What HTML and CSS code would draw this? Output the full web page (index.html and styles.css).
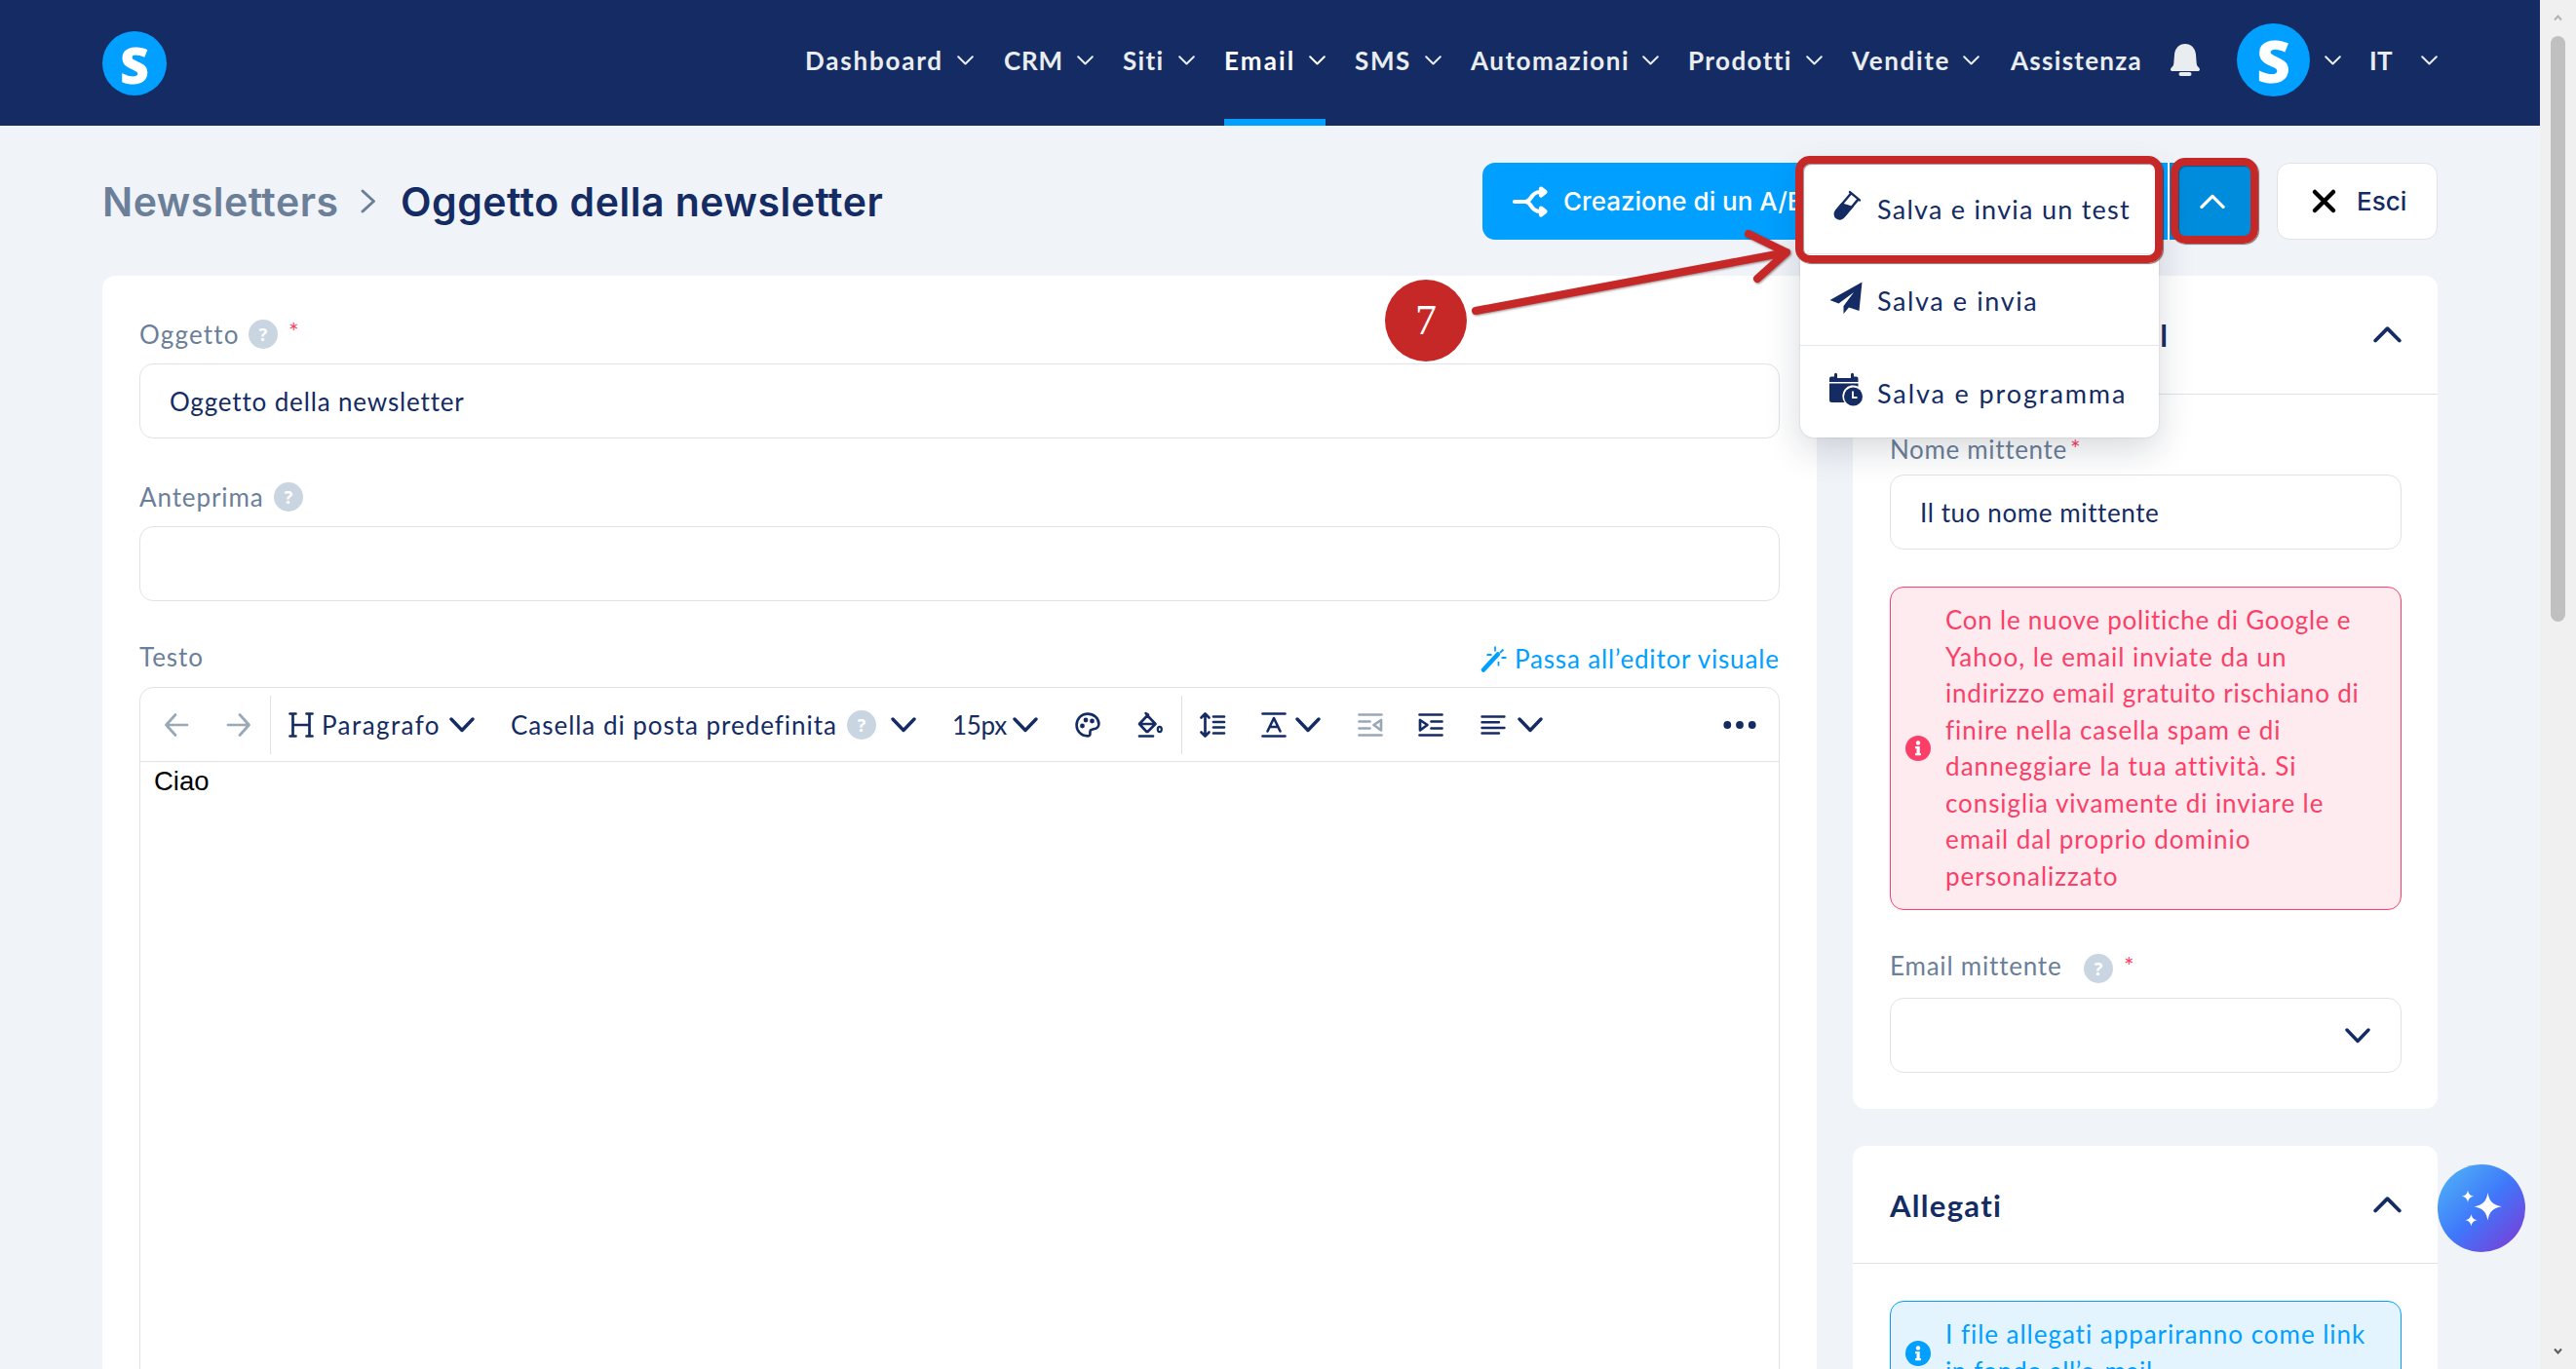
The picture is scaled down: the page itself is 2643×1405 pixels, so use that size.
FILE: index.html
```html
<!DOCTYPE html>
<html lang="it">
<head>
<meta charset="utf-8">
<title>Oggetto della newsletter</title>
<link rel="stylesheet" href="styles.css">
</head>
<body>
<svg class="defs" aria-hidden="true">
  <symbol id="down" viewBox="0 0 26 16"><path d="M2 2l11 11.500L24 2" fill="none" stroke="currentColor" stroke-width="3.400" stroke-linecap="round" stroke-linejoin="round"/></symbol>
  <symbol id="thin" viewBox="0 0 17 10"><path d="M1.200 1.200l7.300 7.300 7.300-7.300" fill="none" stroke="currentColor" stroke-width="2" stroke-linecap="round" stroke-linejoin="round"/></symbol>
  <symbol id="up" viewBox="0 0 29 17"><path d="M2.200 14.500L14.500 2.200l12.300 12.300" fill="none" stroke="currentColor" stroke-width="3.800" stroke-linecap="round" stroke-linejoin="round"/></symbol>
  <symbol id="info" viewBox="0 0 26 26"><circle cx="13" cy="13" r="13" fill="currentColor"/><circle cx="13" cy="7.500" r="2.200" fill="#fff"/><path d="M10 11h4.700v7H16v2.300h-6V18h1.500v-4.700H10z" fill="#fff"/></symbol>
</svg>
<div class="app">
  <div class="page">
    <header class="header">
      <div class="logo">S</div>
      <nav class="nav">
        <a class="item i1"><span class="t n1">Dashboard</span><svg class="thin"><use href="#thin"/></svg></a>
        <a class="item i2"><span class="t n2">CRM</span><svg class="thin"><use href="#thin"/></svg></a>
        <a class="item i3"><span class="t n3">Siti</span><svg class="thin"><use href="#thin"/></svg></a>
        <a class="item i4 active"><span class="t n4">Email</span><svg class="thin"><use href="#thin"/></svg></a>
        <a class="item i5"><span class="t n5">SMS</span><svg class="thin"><use href="#thin"/></svg></a>
        <a class="item i6"><span class="t n6">Automazioni</span><svg class="thin"><use href="#thin"/></svg></a>
        <a class="item i7"><span class="t n7">Prodotti</span><svg class="thin"><use href="#thin"/></svg></a>
        <a class="item i8"><span class="t n8">Vendite</span><svg class="thin"><use href="#thin"/></svg></a>
        <a class="item i9"><span class="t n9">Assistenza</span></a>
        <svg class="bell" viewBox="0 0 30 33"><path d="M15 0c6 0 10.500 4.500 11 11l.7 9c.2 2.200 1 3 2.300 4.300 1.800 2 1 3.700-1 3.700H2c-2 0-2.800-1.700-1-3.700C2.300 23 3.100 22.200 3.300 20L4 11C4.500 4.500 9 0 15 0z" fill="#e9edef"/><rect x="8.500" y="29" width="13" height="4" rx="2" fill="#e9edef"/></svg>
        <div class="avatar">S</div>
        <svg class="thin"><use href="#thin"/></svg>
        <span class="t lang">IT</span>
        <svg class="thin lang-caret"><use href="#thin"/></svg>
      </nav>
    </header>
    <main class="main">
      <div class="top">
        <h1 class="crumbs"><span class="t c1">Newsletters</span><svg class="sep" viewBox="0 0 16 25"><path d="M2 2l11.500 10.500L2 23" fill="none" stroke="#6c7f99" stroke-width="3" stroke-linecap="round" stroke-linejoin="round"/></svg><span class="t c2">Oggetto della newsletter</span></h1>
        <div class="actions">
          <div class="btn ab"><svg class="split" viewBox="0 0 36 32"><g fill="none" stroke="#fff" stroke-width="4.200" stroke-linecap="round" stroke-linejoin="round"><path d="M2 16h11c7 0 5-10 15-10h3M13 16c7 0 5 10 15 10h3M29 2.500l4.500 3.500-4.500 3.500zM29 22.500l4.500 3.500-4.500 3.500z"/></g></svg><span class="t abt">Creazione di un A/B test</span></div>
          <div class="btn save"><div class="caret"><svg viewBox="0 0 29 17"><use href="#up"/></svg></div></div>
          <div class="btn exit"><svg viewBox="0 0 25 25"><path d="M3 3l19 19M22 3L3 22" stroke="#000" stroke-width="4.500" stroke-linecap="round"/></svg><span class="t esci">Esci</span></div>
          <div class="menu">
            <div class="opt"><svg viewBox="0 0 34 34"><g transform="rotate(40 17 17)"><path d="M10.500 3h13M12.200 3v22a4.800 4.800 0 0 0 9.600 0V3" fill="none" stroke="#142c63" stroke-width="2.400" stroke-linecap="round"/><path d="M11 15l12-5v15a6 6 0 0 1-12 0z" fill="#142c63" transform="translate(0 2)"/></g></svg><span class="t m1">Salva e invia un test</span></div>
            <div class="opt"><svg viewBox="0 0 34 34"><path d="M33.500 0.500L30.500 30 20 26.500l-5.500 6.500V25L25 11 9.500 22.500.5 19z" fill="#142c63"/></svg><span class="t m2">Salva e invia</span></div>
            <div class="opt"><svg viewBox="0 0 34 34"><path d="M0 9V5.500Q0 3.500 2 3.500h3V1.200a1.500 1.500 0 0 1 3 0V5h14V1.200a1.500 1.500 0 0 1 3 0v2.300h2.500q2 0 2 2V9z" fill="#142c63"/><path d="M0 10.500h29.500v3.200a11 11 0 0 0-14 16.300H2.500Q0 30 0 27.500z" fill="#142c63"/><circle cx="24.500" cy="24" r="9.500" fill="#142c63"/><path d="M24 18.500v6.500h4.500" fill="none" stroke="#fff" stroke-width="1.800"/></svg><span class="t m3">Salva e programma</span></div>
          </div>
        </div>
      </div>
      <div class="cols">
        <section class="card editor-card">
          <div class="label"><span class="t l1">Oggetto</span><i class="help">?</i><b class="req">*</b></div>
          <div class="input"><span class="t v1">Oggetto della newsletter</span></div>
          <div class="label second"><span class="t l2">Anteprima</span><i class="help">?</i></div>
          <div class="input"></div>
          <div class="label third"><span class="t l3">Testo</span>
            <a class="visual"><svg viewBox="0 0 26 26"><path d="M2 24.500L13.500 12" stroke="#019fff" stroke-width="4.600" stroke-linecap="round"/><path d="M15 10.500l1.800-2" stroke="#019fff" stroke-width="4.600" stroke-linecap="round"/><path d="M14 0.500v5M5.500 9h5M22.500 3.500L19 7M20.500 12h5M17.500 16v4.500" stroke="#019fff" stroke-width="1.800"/></svg><span class="t vis">Passa all’editor visuale</span></a></div>
          <div class="editor">
            <div class="toolbar">
              <svg class="ic back muted" viewBox="0 0 26 26"><path d="M24 13H2.500M12 2.500L2.500 13 12 23.500" /></svg>
              <svg class="ic fwd muted" viewBox="0 0 26 26"><path d="M2 13h21.500M14 2.500L23.500 13 14 23.500"/></svg>
              <span class="rule r1"></span>
              <svg class="ic hd" viewBox="0 0 26 26"><path d="M1.500 1.500h6M18.500 1.500h6M1.500 24.500h6M18.500 24.500h6M4.500 1.500v23M21.500 1.500v23M4.500 13h17"/></svg>
              <span class="t tb1">Paragrafo</span>
              <svg class="dn d1"><use href="#down"/></svg>
              <span class="t tb2">Casella di posta predefinita</span>
              <i class="help th">?</i>
              <svg class="dn d2"><use href="#down"/></svg>
              <span class="t tb3">15px</span>
              <svg class="dn d3"><use href="#down"/></svg>
              <svg class="ic pal" viewBox="0 0 26 26"><path d="M13 1.600C6 1.600 1.600 7 1.600 13S6 24.400 13 24.400c3.500 0 2-3.200 2.600-5.200C16.500 16 24.400 19 24.400 12 24.400 6 19 1.600 13 1.600z" stroke-width="2.600"/><g fill="#142c63" stroke="none"><circle cx="7.500" cy="14" r="2.400"/><circle cx="11" cy="8" r="2.400"/><circle cx="17.500" cy="9" r="2.400"/></g></svg>
              <svg class="ic buck" viewBox="0 0 26 26"><path d="M9.500 2.500l9 9.500-8 8h-1l-7.500-8 9-9.500L8.500 1M2.500 12h15" stroke-width="2.600"/><path d="M2 24.500h14" stroke-width="2.600"/><ellipse cx="22.800" cy="17.500" rx="2" ry="2.600" stroke-width="2.200"/></svg>
              <span class="rule r2"></span>
              <svg class="ic lh" viewBox="0 0 26 26"><path d="M5.500 2v22M1.500 5.500l4-4 4 4M1.500 20.500l4 4 4-4M14 4.500h11M14 10h11M14 15.500h11M14 21.500h11"/></svg>
              <svg class="ic fa" viewBox="0 0 26 26"><path d="M1.500 1.500h23M1.500 24.500h23" /><path d="M6.500 19.500L13 6l6.500 13.500M9 15h8" stroke-width="2.600"/></svg>
              <svg class="dn d4"><use href="#down"/></svg>
              <svg class="ic out muted" viewBox="0 0 26 26"><path d="M1.500 2.500h23M1.500 9.500h11M1.500 16.500h11M1.500 23.500h23M24 8v10.500L16.500 13z"/></svg>
              <svg class="ic ind" viewBox="0 0 26 26"><path d="M1.500 2.500h23M13.500 9.500h11M13.500 16.500h11M1.500 23.500h23M2 8v10.500L9.500 13z"/></svg>
              <svg class="ic al" viewBox="0 0 26 26"><path d="M1.500 4.500h23M1.500 10.200h17.500M1.500 16h23M1.500 21.500h17.500" stroke-width="2.400"/></svg>
              <svg class="dn d5"><use href="#down"/></svg>
              <svg class="dots" viewBox="0 0 34 8"><g fill="#142c63"><circle cx="4.300" cy="4" r="3.900"/><circle cx="17" cy="4" r="3.900"/><circle cx="29.700" cy="4" r="3.900"/></g></svg>
            </div>
            <div class="body">Ciao</div>
          </div>
        </section>
        <aside class="side">
          <section class="card">
            <div class="head tall"><h2 class="t h1">Impostazioni email</h2><svg class="up"><use href="#up"/></svg></div>
            <div class="content first">
              <div class="label"><span class="t s1">Nome mittente</span><b class="req close">*</b></div>
              <div class="input tight"><span class="t s2">Il tuo nome mittente</span></div>
              <div class="alert red"><svg><use href="#info"/></svg><p><span class="t a1">Con le nuove politiche di Google e</span><br><span class="t a2">Yahoo, le email inviate da un</span><br><span class="t a3">indirizzo email gratuito rischiano di</span><br><span class="t a4">finire nella casella spam e di</span><br><span class="t a5">danneggiare la tua attività. Si</span><br><span class="t a6">consiglia vivamente di inviare le</span><br><span class="t a7">email dal proprio dominio</span><br><span class="t a8">personalizzato</span></p></div>
              <div class="label mail"><span class="t s3">Email mittente</span><i class="help">?</i><b class="req">*</b></div>
              <div class="input select"><svg class="dn"><use href="#down"/></svg></div>
            </div>
          </section>
          <section class="card attach">
            <div class="head"><h2 class="t h2">Allegati</h2><svg class="up"><use href="#up"/></svg></div>
            <div class="content">
              <div class="alert blue"><svg><use href="#info"/></svg><p><span class="t b1">I file allegati appariranno come link</span><br><span class="t b2">in fondo all’e-mail.</span></p></div>
            </div>
          </section>
        </aside>
      </div>
    </main>
  </div>
  <div class="scroll">
    <svg class="tri" viewBox="0 0 9 6"><path d="M1 5.500L4.500 1.500 8 5.500" fill="none" stroke="#b4b4b4" stroke-width="2"/></svg>
    <div class="thumb"></div>
    <svg class="tri end" viewBox="0 0 9 6"><path d="M1 .5l3.500 4L8 .5" fill="none" stroke="#5a5a5a" stroke-width="2"/></svg>
  </div>
</div>
<div class="fab"><svg viewBox="0 0 90 90"><g fill="#fff"><path d="M51.500 29c1.500 9 5 12.500 14 14.300-9 1.800-12.500 5.300-14 14.300-1.500-9-5-12.500-14-14.300 9-1.800 12.500-5.300 14-14.300z"/><path d="M31 26.500c.8 4 2.300 5.400 6 6.200-3.700.8-5.200 2.300-6 6.200-.8-3.900-2.300-5.400-6-6.200 3.700-.8 5.200-2.200 6-6.200zM34.500 51c.8 4 2.300 5.400 6 6.200-3.700.8-5.200 2.300-6 6.200-.8-3.900-2.300-5.400-6-6.200 3.700-.8 5.200-2.200 6-6.200z"/></g></svg></div>
<svg class="arrow" viewBox="0 0 340 64"><path d="M14 87L333 27M294 8l39 19-30 27"/></svg>
<div class="mark box1"></div>
<div class="mark box2"></div>
<div class="step">7</div>
</body>
</html>
```

FILE: styles.css
```css
* { box-sizing: border-box; }
body { margin: 0; width: 2643px; height: 1405px; overflow: hidden; position: relative; font-family: Lato, "Open Sans", sans-serif; font-size: 26px; color: #142c63; background: #f0f3f8; }
h1, h2, p { margin: 0; }
i, b { font-style: normal; }
svg { display: block; flex: none; overflow: visible; }
.defs { position: absolute; width: 0; height: 0; }
.t { white-space: nowrap; flex: none; }
.app { display: flex; height: 1405px; }
.page { width: 2606px; height: 1405px; overflow: hidden; }

/* header */
.header { height: 129px; background: #142c63; display: flex; padding-left: 105px; color: #e9edef; }
.logo, .avatar { border-radius: 50%; background: #019fff; color: #fff; font-family: "Open Sans", sans-serif; font-weight: 800; display: flex; align-items: center; justify-content: center; flex: none; }
.logo { width: 66px; height: 66px; margin-top: 32px; font-size: 52px; }
.nav { display: flex; align-items: center; height: 123px; margin-left: 655px; font-size: 26px; font-weight: 700; }
.item { height: 129px; margin-top: 6px; padding-bottom: 6px; display: flex; align-items: center; justify-content: space-between; flex: none; }
.i1 { width: 173px; margin-right: 31px; }
.i2 { width: 92px; margin-right: 30px; }
.i3 { width: 74px; margin-right: 30px; }
.i4 { width: 104px; margin-right: 30px; }
.i5 { width: 89px; margin-right: 30px; }
.i6 { width: 193px; margin-right: 30px; }
.i7 { width: 138px; margin-right: 30px; }
.i8 { width: 131px; margin-right: 32px; }
.i9 { width: 135px; margin-right: 29px; }
.n1 { letter-spacing: 1.800px; }
.n2 { letter-spacing: .83px; }
.n3 { letter-spacing: 1.360px; }
.n4 { letter-spacing: 2.100px; }
.n5 { letter-spacing: 1.640px; }
.n6 { letter-spacing: 1.490px; }
.n7 { letter-spacing: 1.420px; }
.n8 { letter-spacing: 1.660px; }
.n9 { letter-spacing: 1.280px; }
.active { color: #fff; border-bottom: 7px solid #019fff; padding: 1px 0 0; }
.thin { width: 17px; height: 10px; }
.bell { width: 30px; height: 33px; margin-right: 38px; }
.avatar { width: 75px; height: 75px; margin-right: 15px; font-size: 60px; }
.lang { margin-left: 29px; width: 24px; letter-spacing: .34px; }
.lang-caret { margin-left: 29px; }

/* title row */
.main { padding: 38px 105px 0; }
.top { display: flex; justify-content: space-between; height: 79px; position: relative; }
.crumbs { display: flex; align-items: center; font: 600 41px/76px Inter, sans-serif; letter-spacing: .5px; }
.c1 { color: #6c7f99; width: 242px; }
.sep { width: 16px; height: 25px; margin: 0 25px 0 23px; }
.actions { display: flex; position: relative; width: 980px; }
.btn { height: 79px; border-radius: 13px; display: flex; align-items: center; flex: none; font: 500 26px/30px Inter, sans-serif; }
.ab { width: 424px; background: #019fff; color: #fff; padding-left: 31px; }
.split { width: 36px; height: 32px; margin-right: 16px; }
.save { width: 350px; margin-left: 20px; background: #019fff; justify-content: flex-end; overflow: hidden; }
.caret { width: 91px; height: 79px; border-left: 2px solid #fff; background: #008cdc; display: flex; align-items: center; justify-content: center; padding-right: 2px; color: #fff; }
.caret svg { width: 26px; height: 16px; }
.exit { width: 165px; margin-left: 21px; background: #fff; border: 1px solid #dfe3e7; padding-left: 35px; }
.exit svg { width: 25px; height: 25px; margin-right: 21px; }
.menu { position: absolute; left: 326px; top: 0; width: 368px; height: 282px; background: #fff; border-radius: 14px; box-shadow: 0 12px 36px rgba(20, 30, 50, .17), 0 0 2px rgba(20, 30, 50, .2); }
.opt { height: 94px; display: flex; align-items: center; padding: 2px 0 0 30px; font-size: 27px; border-bottom: 1px solid #e3e6e9; }
.opt:last-child { border: 0; }
.opt svg { width: 34px; height: 34px; margin: -6px 15px 0 0; }
.m1 { letter-spacing: 1.250px; }
.m2 { letter-spacing: 1.600px; }
.m3 { letter-spacing: 1.900px; }

/* cards */
.cols { display: grid; grid-template-columns: 1759px 600px; gap: 37px; margin-top: 37px; }
.card { background: #fff; border-radius: 13px; }
.editor-card { padding: 45px 38px 0; height: 1200px; }
.label { display: flex; align-items: center; height: 30px; color: #6c7f99; }
.help { width: 30px; height: 30px; border-radius: 50%; background: #cad5e2; color: #fff; font: 700 18px/30px "Open Sans", sans-serif; text-align: center; margin-left: 10px; flex: none; }
.req { color: #fb3f68; font: 400 25px/25px Lato, sans-serif; align-self: flex-start; margin-left: 11px; }
.close { margin: 2px 0 0 3px; }
.input { height: 77px; border: 1px solid #dfe3e7; border-radius: 14px; display: flex; align-items: center; padding-left: 30px; margin-top: 15px; background: #fff; }
.second { margin-top: 45px; }
.third { margin-top: 42px; justify-content: space-between; }
.l1 { width: 102px; letter-spacing: 1.200px; }
.v1 { letter-spacing: .85px; }
.l2 { width: 128px; letter-spacing: .9px; }
.l3 { letter-spacing: .95px; }
.visual { display: flex; align-items: center; color: #019fff; padding-top: 4px; }
.visual svg { width: 26px; height: 26px; margin-right: 8px; }
.vis { width: 272px; letter-spacing: .83px; }
.editor { margin-top: 16px; height: 760px; border: 1px solid #dfe3e7; border-radius: 14px; }
.toolbar { height: 76px; border-bottom: 1px solid #dfe3e7; display: flex; align-items: center; }
.ic { width: 26px; height: 26px; fill: none; stroke: #142c63; stroke-width: 2.700; stroke-linecap: round; stroke-linejoin: round; }
.muted { stroke: #9aa8b6; }
.rule { width: 1px; height: 60px; background: #dfe3e7; flex: none; }
.dn { width: 26px; height: 16px; }
.back { margin-left: 24px; }
.fwd { margin-left: 38px; }
.r1 { margin-left: 19px; }
.hd { margin-left: 18px; }
.tb1 { margin-left: 8px; width: 122px; letter-spacing: 1.420px; }
.d1 { margin-left: 9px; }
.tb2 { margin-left: 37px; width: 335px; letter-spacing: .97px; }
.th { margin-left: 10px; }
.d2 { margin-left: 15px; }
.tb3 { margin-left: 37px; width: 55px; letter-spacing: -.3px; }
.d3 { margin-left: 7px; }
.pal { margin-left: 38px; }
.buck { margin-left: 38px; }
.r2 { margin-left: 19px; }
.lh { margin-left: 18px; }
.fa { margin-left: 37px; }
.d4 { margin-left: 9px; }
.out { margin-left: 38px; }
.ind { margin-left: 36px; }
.al { margin-left: 38px; }
.d5 { margin-left: 12px; }
.dots { width: 34px; height: 8px; margin-left: 185px; }
.body { font: 27.500px/30px "Liberation Sans", Arial, sans-serif; color: #000; padding: 5px 0 0 14px; }

/* side column */
.head { height: 121px; border-bottom: 1px solid #dfe3e7; display: flex; align-items: center; justify-content: space-between; padding: 0 37px 0 38px; }
.tall { height: 122px; }
.head h2 { font-size: 31px; line-height: 36px; font-weight: 700; padding-top: 1px; }
.h1 { letter-spacing: 1.600px; }
.h2 { letter-spacing: 1.300px; }
.up { width: 29px; height: 17px; }
.content { padding: 38px 37px 37px 38px; }
.first { padding-top: 41px; }
.s1 { width: 182px; letter-spacing: .67px; }
.s2 { letter-spacing: .6px; }
.s3 { width: 177px; letter-spacing: .8px; }
.tight { margin-top: 11px; }
.alert { display: flex; align-items: center; border: 1px solid; border-radius: 14px; padding: 15px; margin-top: 38px; line-height: 37.500px; }
.alert svg { width: 26px; height: 26px; margin-right: 15px; }
.red { color: #fb3f68; background: #feebef; }
.blue { color: #019fff; background: #e4f4ff; margin-top: 0; }
.a1 { letter-spacing: .76px; }
.a2 { letter-spacing: .98px; }
.a3 { letter-spacing: .8px; }
.a4 { letter-spacing: .96px; }
.a5 { letter-spacing: 1.070px; }
.a6 { letter-spacing: .91px; }
.a7 { letter-spacing: .95px; }
.a8 { letter-spacing: .98px; }
.b1 { letter-spacing: .97px; }
.b2 { letter-spacing: .6px; }
.mail { margin-top: 45px; }
.mail .t { margin-top: -7px; }
.mail .help { margin-left: 22px; }
.select { justify-content: flex-end; padding-right: 31px; }
.attach { margin-top: 38px; height: 330px; }

/* scrollbar */
.scroll { width: 37px; background: #f0f0f0; display: flex; flex-direction: column; align-items: center; }
.tri { width: 9px; height: 6px; margin-top: 15px; }
.thumb { width: 15px; height: 601px; margin-top: 16px; border-radius: 8px; background: #c0c0c0; }
.end { margin-top: auto; margin-bottom: 15px; }

/* floating button and step marks */
.fab { position: absolute; left: 2501px; top: 1195px; width: 90px; height: 90px; border-radius: 50%; background: linear-gradient(135deg, #4fb3f6 5%, #3f78fb 50%, #7c3bd6 95%); }
.mark { position: absolute; border: 8px solid #c62828; border-radius: 15px; box-shadow: 1px 1px 1px rgba(60, 20, 20, .6), inset 1px 1px 1px rgba(60, 20, 20, .5); }
.box1 { left: 1842px; top: 160px; width: 377px; height: 110px; }
.box2 { left: 2227px; top: 162px; width: 90px; height: 88px; }
.arrow { position: absolute; left: 1500px; top: 232px; width: 340px; height: 64px; fill: none; stroke: #c62828; stroke-width: 8; stroke-linecap: round; stroke-linejoin: round; filter: drop-shadow(1px 1px 1px rgba(60, 20, 20, .5)); }
.step { position: absolute; left: 1421px; top: 287px; width: 84px; height: 84px; border-radius: 50%; background: #c62828; color: #fff; font: 44px/84px "Liberation Serif", serif; text-align: center; }
```
